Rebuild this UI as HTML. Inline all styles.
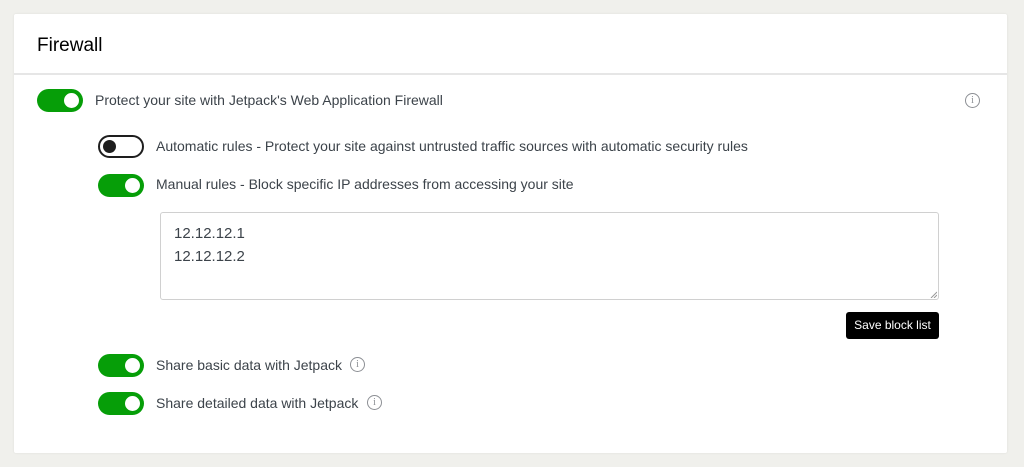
<!DOCTYPE html>
<html><head><style>
body{margin:0;width:1024px;height:467px;background:#f0f0ec;font-family:"Liberation Sans",sans-serif;position:relative;overflow:hidden;color:#2c3338}
.card{position:absolute;left:14px;top:14px;width:993px;height:439px;background:#fff;border-radius:2px;box-shadow:0 0 2px rgba(0,0,0,.08)}
.hd{position:absolute;left:0;top:0;width:100%;height:59px;border-bottom:2px solid #e6e6e6}
.hd h1{position:absolute;left:23px;top:21px;margin:0;font-size:19px;font-weight:normal;color:#000}
.a{position:absolute}
.tg{position:absolute;width:46px;height:23px;border-radius:12px;background:#069e08;box-sizing:border-box}
.tg::after{content:"";position:absolute;right:4px;top:4px;width:15px;height:15px;border-radius:50%;background:#fff}
.tg.off{background:#fff;border:2px solid #1e1e1e}
.tg.off::after{left:3px;right:auto;top:3px;width:13px;height:13px;background:#1e1e1e}
.lb{position:absolute;font-size:14px;color:#3c434a;white-space:nowrap}
.info{position:absolute;width:13px;height:13px;border:1.3px solid #8c8f94;border-radius:50%;font-size:10px;color:#8c8f94;text-align:center;line-height:13px;font-family:"Liberation Serif",serif}
</style></head><body>
<div class="card">
<div class="hd"><h1>Firewall</h1></div>
</div>
<div class="tg" style="left:37px;top:89px"></div>
<div class="lb" style="left:95px;top:92px">Protect your site with Jetpack's Web Application Firewall</div>
<div class="info" style="left:965px;top:93px">i</div>
<div class="tg off" style="left:98px;top:135px"></div>
<div class="lb" style="left:156px;top:138px">Automatic rules - Protect your site against untrusted traffic sources with automatic security rules</div>
<div class="tg" style="left:98px;top:174px"></div>
<div class="lb" style="left:156px;top:176px">Manual rules - Block specific IP addresses from accessing your site</div>
<div class="a" style="left:160px;top:212px;width:777px;height:86px;border:1px solid #d0d0d0;border-radius:3px;font-size:15px;color:#3c434a;line-height:23px;box-sizing:content-box">
<div style="padding:9px 0 0 13px">12.12.12.1<br>12.12.12.2</div>
<svg style="position:absolute;right:1px;bottom:1px" width="7" height="7"><path d="M7 1L1 7M7 4L4 7" stroke="#999" stroke-width="1"/></svg>
</div>
<div class="a" style="left:846px;top:312px;width:93px;height:27px;background:#000;border-radius:3px;color:#fff;font-size:12px;line-height:27px;text-align:center">Save block list</div>
<div class="tg" style="left:98px;top:354px"></div>
<div class="lb" style="left:156px;top:357px">Share basic data with Jetpack</div>
<div class="info" style="left:350px;top:357px">i</div>
<div class="tg" style="left:98px;top:392px"></div>
<div class="lb" style="left:156px;top:395px">Share detailed data with Jetpack</div>
<div class="info" style="left:367px;top:395px">i</div>
</body></html>
